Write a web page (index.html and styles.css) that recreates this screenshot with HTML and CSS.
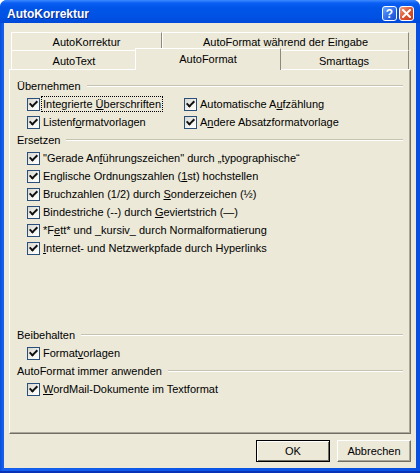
FILE: index.html
```html
<!DOCTYPE html>
<html>
<head>
<meta charset="utf-8">
<title>AutoKorrektur</title>
<link rel="stylesheet" href="styles.css">
</head>
<body>
<div class="dlg">
    <div class="dlg-title">
        <span class="dlg-caption">AutoKorrektur</span>
        <span class="tb-btn tb-help">?</span>
        <span class="tb-btn tb-close">
            <svg width="9" height="9" viewBox="0 0 9 9"><path d="M1 1 L8 8 M8 1 L1 8" stroke="#fff" stroke-width="2" stroke-linecap="square"/></svg>
        </span>
    </div>
    <div class="dlg-body">
        <div class="tabs">
            <div class="tab-row row-back">
                <div class="tab tab-ak">AutoKorrektur</div>
                <div class="tab tab-fill">AutoFormat während der Eingabe</div>
            </div>
            <div class="tab-row row-front">
                <div class="tab tab-at">AutoText</div>
                <div class="tab tab-sel">AutoFormat</div>
                <div class="tab tab-fill">Smarttags</div>
            </div>
        </div>
        <div class="panel">
            <div class="grp">Übernehmen</div>
            <div class="row two">
                <label class="chk"><i class="box"></i><span class="focus">Integrierte <u>Ü</u>berschriften</span></label>
                <label class="chk"><i class="box"></i><span>Automatische A<u>u</u>fzählung</span></label>
            </div>
            <div class="row two">
                <label class="chk"><i class="box"></i><span>Listenf<u>o</u>rmatvorlagen</span></label>
                <label class="chk"><i class="box"></i><span>A<u>n</u>dere Absatzformatvorlage</span></label>
            </div>

            <div class="grp">Ersetzen</div>
            <div class="row"><label class="chk"><i class="box"></i><span>"Gerade An<u>f</u>ührungszeichen" durch „typographische“</span></label></div>
            <div class="row"><label class="chk"><i class="box"></i><span>Englische Ordnungszahlen (<u>1</u>st) hochstellen</span></label></div>
            <div class="row"><label class="chk"><i class="box"></i><span>Bruchzahlen (1/2) durch <u>S</u>onderzeichen (½)</span></label></div>
            <div class="row"><label class="chk"><i class="box"></i><span>Bindestriche (--) durch <u>G</u>eviertstrich (—)</span></label></div>
            <div class="row"><label class="chk"><i class="box"></i><span>*F<u>e</u>tt* und _kursiv_ durch Normalformatierung</span></label></div>
            <div class="row"><label class="chk"><i class="box"></i><span><u>I</u>nternet- und Netzwerkpfade durch Hyperlinks</span></label></div>

            <div class="lower">
                <div class="grp">Beibehalten</div>
                <div class="row"><label class="chk"><i class="box"></i><span>Format<u>v</u>orlagen</span></label></div>
                <div class="grp">AutoFormat immer anwenden</div>
                <div class="row"><label class="chk"><i class="box"></i><span><u>W</u>ordMail-Dokumente im Textformat</span></label></div>
            </div>
        </div>
        <div class="btns">
            <button class="btn btn-default">OK</button>
            <button class="btn">Abbrechen</button>
        </div>
    </div>
</div>
</body>
</html>
```

FILE: styles.css
```css
* {
    box-sizing: border-box;
}
html, body {
    margin: 0;
    padding: 0;
}
body {
    width: 420px;
    height: 473px;
    background: #fff;
    font: 11px "Liberation Sans", Tahoma, Arial, sans-serif;
    color: #000;
}
.dlg {
    width: 420px;
    height: 473px;
    display: flex;
    flex-direction: column;
    background: linear-gradient(to right, #0A4FD8, #1560EE 3px, #0A55E6 50%, #0A50E0 100%);
    border-radius: 7px 7px 0 0;
    padding-bottom: 5px;
    box-shadow: inset 0 -2px 0 #0833B8;
}
.dlg-title {
    height: 23px;
    display: flex;
    align-items: center;
    padding: 4px 6px 0 7px;
    background: linear-gradient(#3D8BFF 0, #0A5EF4 3px, #0055E8 8px, #0052E4 17px, #0049D8 23px);
    border-radius: 7px 7px 0 0;
}
.dlg-caption {
    flex: 1;
    color: #fff;
    font: bold 12px "Liberation Sans", Arial, sans-serif;
    text-shadow: 1px 1px 0 #0A2A90;
}
.tb-btn {
    width: 15px;
    height: 15px;
    border: 1px solid #fff;
    border-radius: 3px;
    display: flex;
    align-items: center;
    justify-content: center;
    color: #fff;
    font: bold 12px "Liberation Sans", Arial, sans-serif;
}
.tb-help {
    margin-right: 2px;
    background: linear-gradient(135deg, #6AA4FF, #2E6CEA 55%, #1A4CCB);
}
.tb-close {
    background: linear-gradient(135deg, #F2A083, #E0532E 50%, #C2381A);
}
.dlg-body {
    flex: 1;
    margin: 0 4px;
    padding: 9px 5px 6px;
    background: #ECE9D8;
    display: flex;
    flex-direction: column;
}

/* tabs */
.tabs {
    margin: 0 2px;
}
.tab-row {
    display: flex;
}
.row-back {
    height: 18px;
}
.row-front {
    height: 19px;
}
.tab {
    display: flex;
    align-items: center;
    justify-content: center;
    padding-top: 1px;
    background: #ECE9D8;
    border-top: 1px solid #fff;
    border-left: 1px solid #fff;
    border-right: 1px solid #8D8A7D;
}
.tab-ak {
    width: 151px;
}
.tab-at {
    width: 126px;
}
.tab-fill {
    flex: 1;
}
.tab-sel {
    width: 146px;
    margin: -2px -2px -1px;
    padding: 0 0 2px;
    position: relative;
    z-index: 1;
}

/* page */
.panel {
    flex: 1;
    display: flex;
    flex-direction: column;
    border: 1px solid;
    border-color: #fff #716F64 #716F64 #fff;
    box-shadow: inset -1px -1px 0 #ACA899;
    padding: 7px 7px 35px 7px;
}
.grp {
    height: 18px;
    display: flex;
    align-items: center;
    gap: 6px;
}
.grp::after {
    content: "";
    flex: 1;
    border-top: 1px solid #C5C2B2;
    border-bottom: 1px solid #fff;
}
.row {
    height: 18px;
    padding-left: 10px;
    display: flex;
    align-items: center;
}
.row.two {
    display: grid;
    grid-template-columns: 157px 1fr;
}
.chk {
    display: flex;
    align-items: center;
    white-space: nowrap;
}
.box {
    width: 13px;
    height: 13px;
    margin-right: 3px;
    border: 1px solid #2A4F7A;
    background: linear-gradient(135deg, #D6D5CD, #F4F4F0 60%, #fff);
    display: flex;
    align-items: center;
    justify-content: center;
}
.box::after {
    content: "";
    width: 3px;
    height: 6px;
    margin-top: -2px;
    border: solid #111;
    border-width: 0 2px 2px 0;
    transform: rotate(45deg);
}
.focus {
    margin-left: -2px;
    padding: 1px;
    border: 1px dotted #000;
}
.lower {
    margin-top: auto;
}

/* buttons */
.btns {
    display: flex;
    justify-content: flex-end;
    gap: 7px;
    margin-top: 6px;
}
.btn {
    width: 74px;
    height: 22px;
    padding: 0;
    font: 11px "Liberation Sans", Tahoma, Arial, sans-serif;
    color: #000;
    background: #ECE9D8;
    border: 1px solid;
    border-color: #fff #716F64 #716F64 #fff;
    box-shadow: inset -1px -1px 0 #ACA899;
}
.btn-default {
    border-color: #000;
    box-shadow: inset 1px 1px 0 #fff, inset -1px -1px 0 #716F64;
}
```
